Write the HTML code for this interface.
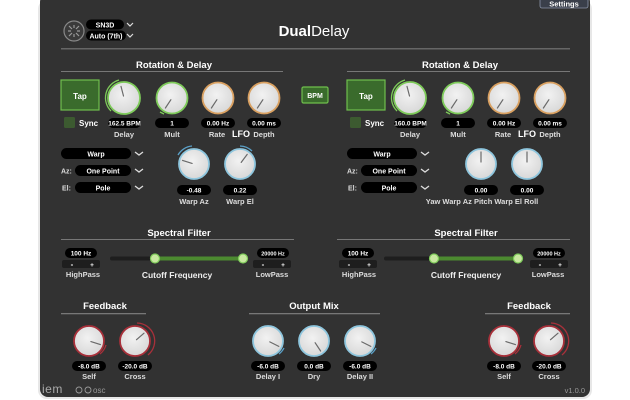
<!DOCTYPE html>
<html><head><meta charset="utf-8"><style>
html,body{margin:0;padding:0;background:#fff;width:630px;height:400px;overflow:hidden}
svg{display:block;font-family:"Liberation Sans",sans-serif}
</style></head><body>
<svg width="630" height="400" viewBox="0 0 630 400" xmlns="http://www.w3.org/2000/svg">
<defs>
<radialGradient id="kf" cx="0.45" cy="0.4" r="0.65"><stop offset="0" stop-color="#f2f2f2"/><stop offset="1" stop-color="#d6d6d6"/></radialGradient>
</defs>
<rect x="38" y="0" width="554" height="399" rx="9" fill="#d0d0d0" opacity="0.5"/>
<rect x="40" y="-6" width="550" height="403" rx="8" fill="#323232"/>
<!-- settings -->
<rect x="540" y="-4" width="48" height="12" rx="2" fill="#3a3f4a" stroke="#8a94a8" stroke-width="0.8"/>
<text x="564" y="6.5" font-size="7.5" font-weight="bold" fill="#fff" text-anchor="middle">Settings</text>
<!-- header -->
<circle cx="74" cy="31" r="10" fill="#3a3a3a" stroke="#888" stroke-width="1.2"/>
<g stroke="#999" stroke-width="1.2" fill="none"><path d="M69 26 L72 29 M79 26 L76 29 M69 36 L72 33 M79 36 L76 33 M68 31h3 M77 31h3 M74 25v3 M74 34v3"/></g>
<rect x="86" y="19.5" width="38" height="10" rx="5" fill="#000"/>
<text x="105" y="27.5" font-size="7" font-weight="bold" fill="#fff" text-anchor="middle">SN3D</text>
<rect x="86" y="30.5" width="40" height="10" rx="5" fill="#000"/>
<text x="106" y="38.5" font-size="7" font-weight="bold" fill="#fff" text-anchor="middle">Auto (7th)</text>
<g stroke="#ddd" stroke-width="1.2" fill="none"><path d="M127 23l3 3 3-3M127 34l3 3 3-3"/></g>
<text x="314" y="36" font-size="15" fill="#fff" text-anchor="middle"><tspan font-weight="bold">Dual</tspan>Delay</text>
<rect x="61" y="48" width="509" height="1.5" fill="#666"/>

<!-- section titles and lines -->
<g font-size="9.5" font-weight="bold" fill="#fff" text-anchor="middle">
<text x="174" y="68">Rotation &amp; Delay</text>
<text x="460" y="68">Rotation &amp; Delay</text>
<text x="179" y="236">Spectral Filter</text>
<text x="466" y="236">Spectral Filter</text>
<text x="105" y="309">Feedback</text>
<text x="314" y="309">Output Mix</text>
<text x="529" y="309">Feedback</text>
</g>
<g fill="#777">
<rect x="61" y="71" width="222" height="1"/>
<rect x="347" y="71" width="223" height="1"/>
<rect x="61" y="239" width="233" height="1"/>
<rect x="337" y="239" width="233" height="1"/>
<rect x="61" y="313" width="85" height="1.3"/>
<rect x="249" y="313" width="131" height="1.3"/>
<rect x="485" y="313" width="85" height="1.3"/>
</g>

<!-- Tap & BPM -->
<rect x="61" y="80" width="38" height="30" fill="#3a6b2c" stroke="#6fbf4d" stroke-width="1.2"/>
<text x="80" y="99" font-size="8" font-weight="bold" fill="#fff" text-anchor="middle">Tap</text>
<rect x="347" y="80" width="38" height="30" fill="#3a6b2c" stroke="#6fbf4d" stroke-width="1.2"/>
<text x="366" y="99" font-size="8" font-weight="bold" fill="#fff" text-anchor="middle">Tap</text>
<rect x="302" y="87" width="26" height="16" rx="1.5" fill="#3a6b2c" stroke="#6fbf4d" stroke-width="1.2"/>
<text x="315" y="98" font-size="7" font-weight="bold" fill="#fff" text-anchor="middle">BPM</text>
<rect x="64" y="117" width="11" height="11" rx="1.5" fill="#3c5a30"/>
<text x="79" y="126" font-size="8" font-weight="bold" fill="#fff">Sync</text>
<rect x="350" y="117" width="11" height="11" rx="1.5" fill="#3c5a30"/>
<text x="365" y="126" font-size="8" font-weight="bold" fill="#fff">Sync</text>

<!-- knobs -->
<g fill="url(#kf)" stroke-width="1.8">
<circle cx="124" cy="98" r="16" stroke="#7ecb5a"/>
<circle cx="172" cy="98" r="15.5" stroke="#7ecb5a"/>
<circle cx="218" cy="98" r="15.5" stroke="#d9a060"/>
<circle cx="264" cy="98" r="15.5" stroke="#d9a060"/>
<circle cx="410" cy="98" r="16" stroke="#7ecb5a"/>
<circle cx="458" cy="98" r="15.5" stroke="#7ecb5a"/>
<circle cx="504" cy="98" r="15.5" stroke="#d9a060"/>
<circle cx="550" cy="98" r="15.5" stroke="#d9a060"/>
<circle cx="194" cy="164" r="15" stroke="#8ec6de"/>
<circle cx="240" cy="164" r="15" stroke="#8ec6de"/>
<circle cx="481" cy="164" r="15" stroke="#8ec6de"/>
<circle cx="527" cy="164" r="15" stroke="#8ec6de"/>
<circle cx="89" cy="341" r="15" stroke="#a8303a"/>
<circle cx="135" cy="341" r="15" stroke="#a8303a"/>
<circle cx="504" cy="341" r="15" stroke="#a8303a"/>
<circle cx="549" cy="341" r="15" stroke="#a8303a"/>
<circle cx="268" cy="341" r="15" stroke="#8ec6de"/>
<circle cx="314" cy="341" r="15" stroke="#8ec6de"/>
<circle cx="360" cy="341" r="15" stroke="#8ec6de"/>
</g>
<!-- arcs -->
<g fill="none" stroke-width="1.3">
<path d="M111 111 A18.5 18.5 0 0 1 119 80" stroke="#7ecb5a"/>
<path d="M397 111 A18.5 18.5 0 0 1 405 80" stroke="#7ecb5a"/>
<path d="M160 112 L164 114" stroke="#7ecb5a"/>
<path d="M446 112 L450 114" stroke="#7ecb5a"/>
<path d="M178 155 A18 18 0 0 1 192 146" stroke="#5aa0c8"/>
<path d="M240 146 A18 18 0 0 1 252 151" stroke="#5aa0c8"/>
<path d="M100 354 A18 18 0 0 0 106 345" stroke="#a8303a"/>
<path d="M137 323 A18 18 0 0 1 148 355" stroke="#a8303a"/>
<path d="M515 354 A18 18 0 0 0 521 345" stroke="#a8303a"/>
<path d="M551 323 A18 18 0 0 1 562 355" stroke="#a8303a"/>
<path d="M279 354 A18 18 0 0 0 284 348" stroke="#5aa0c8"/>
<path d="M371 354 A18 18 0 0 0 376 348" stroke="#5aa0c8"/>
</g>
<g stroke="#6a6a6a" stroke-width="1.2" stroke-linecap="round">
<path d="M123.5 96L121 86.4"/><path d="M170.9 99.7L165.4 108"/><path d="M216.9 99.7L211.4 108"/><path d="M262.9 99.7L257.4 108"/>
<path d="M409.5 96L407 86.4"/><path d="M456.9 99.7L451.4 108"/><path d="M502.9 99.7L497.4 108"/><path d="M548.9 99.7L543.4 108"/>
<path d="M192.1 163.4L182.6 160.4"/><path d="M241.2 162.4L247.2 154.4"/>
<path d="M481 162L481 152"/><path d="M527 162L527 152"/>
<path d="M90.9 341.6L100.4 344.6"/><path d="M136.5 339.7L144 333.2"/>
<path d="M505.9 341.6L515.4 344.6"/><path d="M550.5 339.7L558 333.2"/>
<path d="M269.8 341.9L278.8 346.4"/><path d="M315.1 342.7L320.6 351"/><path d="M361.8 341.9L370.8 346.4"/>
</g>

<!-- value pills -->
<g fill="#000">
<rect x="108" y="118" width="33" height="10" rx="5"/><rect x="155" y="118" width="34" height="10" rx="5"/><rect x="201" y="118" width="34" height="10" rx="5"/><rect x="247" y="118" width="34" height="10" rx="5"/>
<rect x="394" y="118" width="33" height="10" rx="5"/><rect x="441" y="118" width="34" height="10" rx="5"/><rect x="487" y="118" width="34" height="10" rx="5"/><rect x="533" y="118" width="34" height="10" rx="5"/>
<rect x="177" y="185" width="34" height="10" rx="5"/><rect x="223" y="185" width="34" height="10" rx="5"/>
<rect x="464" y="185" width="34" height="10" rx="5"/><rect x="510" y="185" width="34" height="10" rx="5"/>
<rect x="72" y="361" width="34" height="10" rx="5"/><rect x="118" y="361" width="34" height="10" rx="5"/>
<rect x="487" y="361" width="34" height="10" rx="5"/><rect x="532" y="361" width="34" height="10" rx="5"/>
<rect x="251" y="361" width="34" height="10" rx="5"/><rect x="297" y="361" width="34" height="10" rx="5"/><rect x="343" y="361" width="34" height="10" rx="5"/>
<rect x="61" y="148" width="70" height="11" rx="5.5"/><rect x="75" y="165" width="56" height="11" rx="5.5"/><rect x="75" y="182" width="56" height="11" rx="5.5"/>
<rect x="347" y="148" width="70" height="11" rx="5.5"/><rect x="361" y="165" width="56" height="11" rx="5.5"/><rect x="361" y="182" width="56" height="11" rx="5.5"/>
<rect x="65" y="248" width="32" height="10" rx="5"/><rect x="257" y="248" width="32" height="10" rx="5"/>
<rect x="342" y="248" width="32" height="10" rx="5"/><rect x="533" y="248" width="32" height="10" rx="5"/>
</g>
<g fill="#1e1e1e">
<rect x="62" y="260" width="38" height="8" rx="2"/><rect x="253" y="260" width="38" height="8" rx="2"/>
<rect x="339" y="260" width="38" height="8" rx="2"/><rect x="530" y="260" width="38" height="8" rx="2"/>
</g>
<g font-size="6.5" font-weight="bold" fill="#fff" text-anchor="middle">
<text x="124.5" y="125.5">162.5 BPM</text><text x="172" y="125.5">1</text><text x="218" y="125.5">0.00 Hz</text><text x="264" y="125.5">0.00 ms</text>
<text x="410.5" y="125.5">160.0 BPM</text><text x="458" y="125.5">1</text><text x="504" y="125.5">0.00 Hz</text><text x="550" y="125.5">0.00 ms</text>
<text x="194" y="192.5">-0.48</text><text x="240" y="192.5">0.22</text>
<text x="481" y="192.5">0.00</text><text x="527" y="192.5">0.00</text>
<text x="89" y="368.5">-8.0 dB</text><text x="135" y="368.5">-20.0 dB</text>
<text x="504" y="368.5">-8.0 dB</text><text x="549" y="368.5">-20.0 dB</text>
<text x="268" y="368.5">-6.0 dB</text><text x="314" y="368.5">0.0 dB</text><text x="360" y="368.5">-6.0 dB</text>
<text x="81" y="255.5">100 Hz</text><text x="273" y="255.5" font-size="5.5">20000 Hz</text>
<text x="358" y="255.5">100 Hz</text><text x="549" y="255.5" font-size="5.5">20000 Hz</text>
<text x="72" y="267" font-size="8">-</text><text x="92" y="267">+</text><text x="263" y="267" font-size="8">-</text><text x="283" y="267">+</text>
<text x="349" y="267" font-size="8">-</text><text x="369" y="267">+</text><text x="540" y="267" font-size="8">-</text><text x="560" y="267">+</text>
<text x="96" y="156.5" font-size="7">Warp</text><text x="103" y="173.5" font-size="7">One Point</text><text x="103" y="190.5" font-size="7">Pole</text>
<text x="382" y="156.5" font-size="7">Warp</text><text x="389" y="173.5" font-size="7">One Point</text><text x="389" y="190.5" font-size="7">Pole</text>
</g>
<g font-size="7" font-weight="bold" fill="#ddd">
<text x="61" y="173.5">Az:</text><text x="62" y="190.5">El:</text>
<text x="347" y="173.5">Az:</text><text x="348" y="190.5">El:</text>
</g>
<g stroke="#ddd" stroke-width="1.3" fill="none">
<path d="M135 152l4 3 4-3M135 169l4 3 4-3M135 186l4 3 4-3M421 152l4 3 4-3M421 169l4 3 4-3M421 186l4 3 4-3"/>
</g>

<!-- labels -->
<g font-size="7.5" fill="#ddd" text-anchor="middle" font-weight="bold">
<text x="124" y="137">Delay</text><text x="172" y="137">Mult</text><text x="217" y="137">Rate</text><text x="264" y="137">Depth</text>
<text x="410" y="137">Delay</text><text x="458" y="137">Mult</text><text x="503" y="137">Rate</text><text x="550" y="137">Depth</text>
<text x="194" y="204">Warp Az</text><text x="240" y="204">Warp El</text>
<text x="482" y="204">Yaw Warp Az Pitch Warp El  Roll</text>
<text x="83" y="277">HighPass</text><text x="272" y="277">LowPass</text>
<text x="359" y="277">HighPass</text><text x="548" y="277">LowPass</text>
<text x="89" y="379">Self</text><text x="135" y="379">Cross</text>
<text x="504" y="379">Self</text><text x="549" y="379">Cross</text>
<text x="268" y="379">Delay I</text><text x="314" y="379">Dry</text><text x="360" y="379">Delay II</text>
</g>
<g font-size="9" fill="#fff" font-weight="bold" text-anchor="middle">
<text x="241" y="137">LFO</text><text x="527" y="137">LFO</text>
</g>
<g font-size="8.5" fill="#eee" font-weight="bold" text-anchor="middle">
<text x="177" y="278">Cutoff Frequency</text><text x="466" y="278">Cutoff Frequency</text>
</g>

<!-- sliders -->
<rect x="110" y="256.5" width="135" height="4" rx="2" fill="#1e1e1e"/>
<rect x="155" y="256.5" width="88" height="4" fill="#4c8a30"/>
<circle cx="155" cy="258.5" r="4.5" fill="#c8e8a0" stroke="#7ecb5a" stroke-width="1.2"/>
<circle cx="243" cy="258.5" r="4.5" fill="#c8e8a0" stroke="#7ecb5a" stroke-width="1.2"/>
<rect x="384" y="256.5" width="135" height="4" rx="2" fill="#1e1e1e"/>
<rect x="434" y="256.5" width="84" height="4" fill="#4c8a30"/>
<circle cx="434" cy="258.5" r="4.5" fill="#c8e8a0" stroke="#7ecb5a" stroke-width="1.2"/>
<circle cx="518" cy="258.5" r="4.5" fill="#c8e8a0" stroke="#7ecb5a" stroke-width="1.2"/>

<!-- footer -->
<text x="42" y="393" font-size="12" fill="#aaa" letter-spacing="0.5">iem</text>
<circle cx="79" cy="390" r="3" fill="none" stroke="#999" stroke-width="0.9"/>
<circle cx="88" cy="390" r="3" fill="none" stroke="#999" stroke-width="0.9"/>
<text x="93" y="393" font-size="8" fill="#999">osc</text>
<text x="585" y="393" font-size="7.5" fill="#999" text-anchor="end">v1.0.0</text>
</svg>
</body></html>
